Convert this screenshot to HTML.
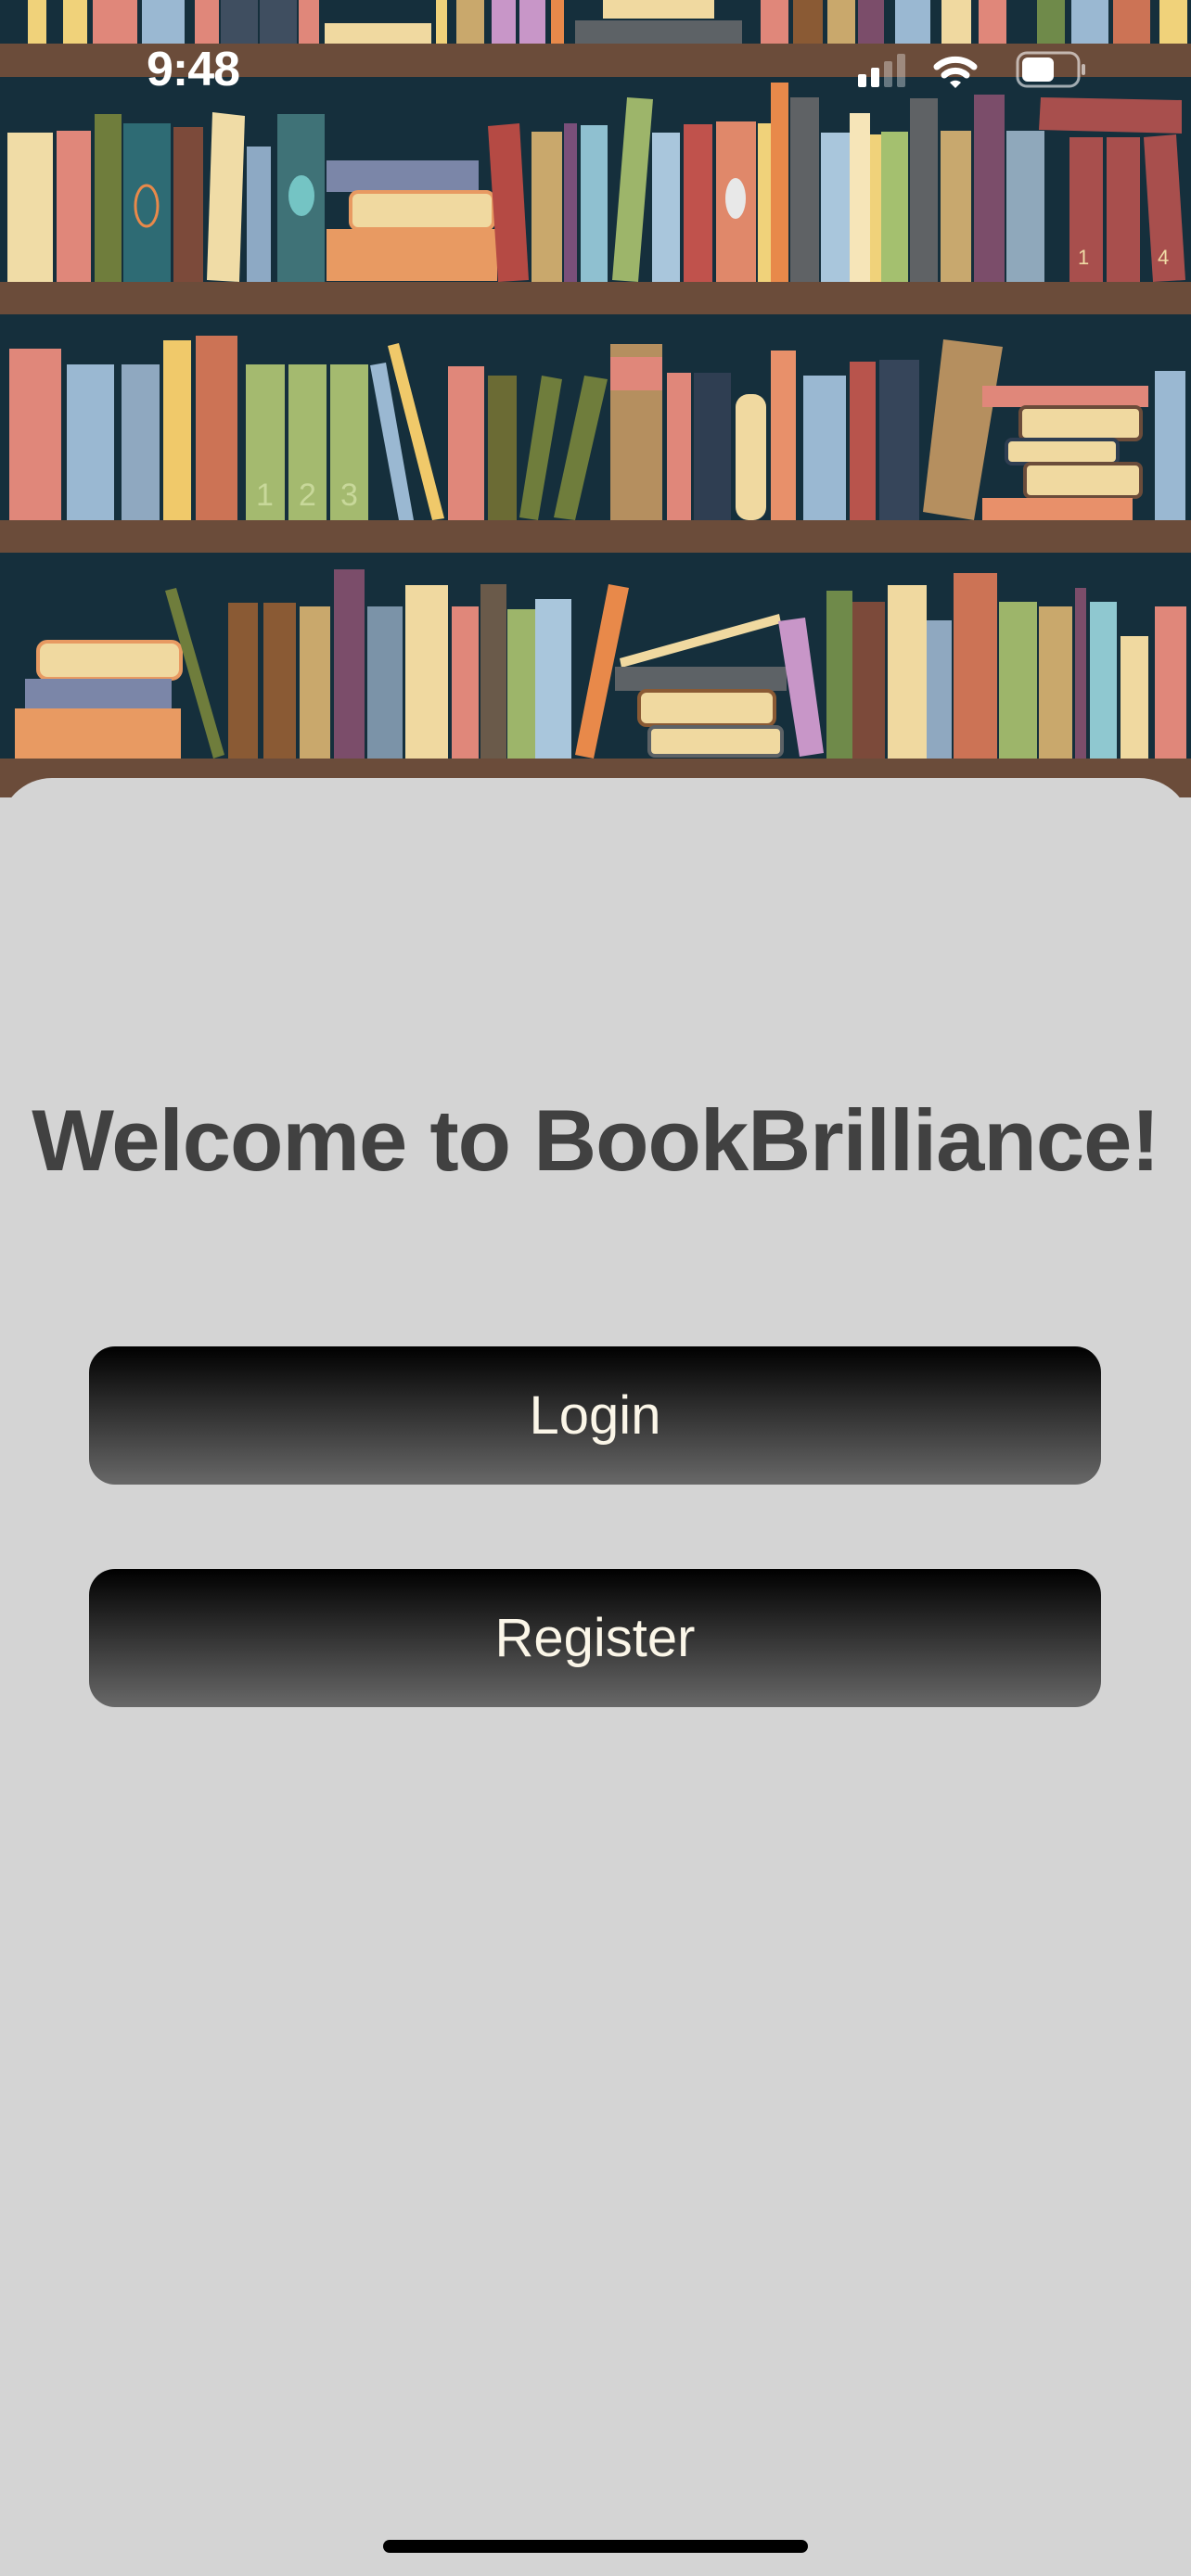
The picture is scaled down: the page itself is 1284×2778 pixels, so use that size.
<!DOCTYPE html>
<html><head><meta charset="utf-8"><style>
html,body{margin:0;padding:0;}
body{width:1284px;height:2778px;position:relative;overflow:hidden;background:#d4d4d4;font-family:"Liberation Sans",sans-serif;}
#shelf{position:absolute;left:0;top:0;}
.panel{position:absolute;left:0;top:839px;width:1284px;height:1939px;background:#d4d4d4;border-radius:56px 56px 0 0;}
.title{position:absolute;left:0;width:1284px;top:1176px;text-align:center;font-size:94px;font-weight:bold;color:#414141;letter-spacing:-1px;white-space:nowrap;}
.btn{position:absolute;left:96px;width:1091px;height:149px;border-radius:28px;background:linear-gradient(#000,#686868);color:#fbf6e8;font-size:58px;text-align:center;line-height:149px;}
.home{position:absolute;left:413px;top:2739px;width:458px;height:14px;border-radius:7px;background:#000;}
.time{position:absolute;left:158px;top:45px;color:#fff;font-weight:bold;font-size:52px;letter-spacing:-1px;}
</style></head><body>
<svg id="shelf" width="1284" height="860" viewBox="0 0 1284 860">
<rect width="1284" height="860" fill="#152f3c"/>
<g>
<rect x="30" y="0" width="20" height="47" fill="#f0d27a"/><rect x="68" y="0" width="26" height="47" fill="#f0d27a"/>
<rect x="100" y="0" width="48" height="47" fill="#e0877a"/><rect x="153" y="0" width="46" height="47" fill="#9ab8d2"/>
<rect x="210" y="0" width="26" height="47" fill="#e0877a"/><rect x="238" y="0" width="40" height="47" fill="#3f4e60"/>
<rect x="280" y="0" width="40" height="47" fill="#3f4e60"/><rect x="322" y="0" width="22" height="47" fill="#e0877a"/>
<rect x="350" y="25" width="115" height="22" fill="#f0d9a0"/><rect x="470" y="0" width="12" height="47" fill="#f0d27a"/>
<rect x="492" y="0" width="30" height="47" fill="#c9a86c"/><rect x="530" y="0" width="26" height="47" fill="#c896c8"/>
<rect x="560" y="0" width="28" height="47" fill="#c896c8"/><rect x="594" y="0" width="14" height="47" fill="#e8894a"/>
<rect x="620" y="22" width="180" height="25" fill="#5d6266"/><rect x="650" y="0" width="120" height="20" fill="#f0d9a0"/>
<rect x="820" y="0" width="30" height="47" fill="#e0877a"/><rect x="855" y="0" width="32" height="47" fill="#8a5a34"/>
<rect x="892" y="0" width="30" height="47" fill="#c9a86c"/><rect x="925" y="0" width="28" height="47" fill="#7b4d6a"/>
<rect x="965" y="0" width="38" height="47" fill="#9ab8d2"/><rect x="1015" y="0" width="32" height="47" fill="#f0d9a0"/>
<rect x="1055" y="0" width="30" height="47" fill="#e0877a"/><rect x="1118" y="0" width="30" height="47" fill="#6f8a4a"/>
<rect x="1155" y="0" width="40" height="47" fill="#9ab8d2"/><rect x="1200" y="0" width="40" height="47" fill="#cc7355"/>
<rect x="1250" y="0" width="30" height="47" fill="#f0d27a"/>
</g>
<rect x="0" y="47" width="1284" height="36" fill="#6b4c3a"/>
<g>
<rect x="8" y="143" width="49" height="161" fill="#f0dca6"/>
<rect x="61" y="141" width="37" height="163" fill="#e0877a"/>
<rect x="102" y="123" width="29" height="181" fill="#6f7d3c"/>
<rect x="133" y="133" width="51" height="171" fill="#2e6b74"/><ellipse cx="158" cy="222" rx="12" ry="22" fill="none" stroke="#e8894a" stroke-width="3"/>
<rect x="187" y="137" width="32" height="167" fill="#7c4a3a"/>
<polygon points="229,121 264,125 258,304 223,302" fill="#f0dca6"/>
<rect x="266" y="158" width="26" height="146" fill="#8da9c4"/>
<rect x="299" y="123" width="51" height="181" fill="#3f7277"/><ellipse cx="325" cy="211" rx="14" ry="22" fill="#74c4c4"/>
<rect x="352" y="173" width="164" height="34" fill="#7b86a8"/>
<rect x="378" y="207" width="154" height="40" rx="8" fill="#f0d9a0" stroke="#e89a62" stroke-width="4"/>
<rect x="352" y="247" width="184" height="56" fill="#e89a62"/>
<polygon points="526,136 560,133 570,302 537,304" fill="#b54a44"/>
<rect x="573" y="142" width="33" height="162" fill="#c9a86c"/>
<rect x="608" y="133" width="14" height="171" fill="#7a4f7a"/>
<rect x="626" y="135" width="29" height="169" fill="#8fc0d0"/>
<polygon points="676,105 704,107 688,304 660,302" fill="#9db56a"/>
<rect x="703" y="143" width="30" height="161" fill="#a9c6dc"/>
<rect x="737" y="134" width="31" height="170" fill="#c0524c"/>
<rect x="772" y="131" width="43" height="173" fill="#e0886a"/><ellipse cx="793" cy="214" rx="11" ry="22" fill="#e8e8e8"/>
<rect x="817" y="133" width="14" height="171" fill="#f0d27a"/>
<rect x="831" y="89" width="19" height="215" fill="#e8894a"/>
<rect x="852" y="105" width="31" height="199" fill="#5f6265"/>
<rect x="885" y="143" width="31" height="161" fill="#a9c6dc"/>
<rect x="916" y="122" width="22" height="182" fill="#f6e5b8"/>
<rect x="938" y="145" width="12" height="159" fill="#f0d27a"/>
<rect x="950" y="142" width="29" height="162" fill="#a4c06f"/>
<rect x="981" y="106" width="30" height="198" fill="#5f6265"/>
<rect x="1014" y="141" width="33" height="163" fill="#c8a86e"/>
<rect x="1050" y="102" width="33" height="202" fill="#7b4d6a"/>
<rect x="1085" y="141" width="41" height="163" fill="#8fa8bb"/>
<polygon points="1122,105 1274,108 1274,144 1120,140" fill="#a84f4d"/>
<rect x="1153" y="148" width="36" height="156" fill="#a84f4d"/>
<rect x="1193" y="148" width="36" height="156" fill="#a84f4d"/>
<polygon points="1233,148 1268,145 1278,302 1243,304" fill="#a84f4d"/>
<text x="1162" y="285" fill="#f0dca6" font-size="22" font-family="Liberation Sans">1</text>
<text x="1248" y="285" fill="#f0dca6" font-size="22" font-family="Liberation Sans">4</text>
</g>
<rect x="0" y="304" width="1284" height="35" fill="#6b4c3a"/>
<g>
<rect x="10" y="376" width="56" height="185" fill="#e0877a"/>
<rect x="72" y="393" width="51" height="168" fill="#9ab8d2"/>
<rect x="131" y="393" width="41" height="168" fill="#8fa8c0"/>
<rect x="176" y="367" width="30" height="194" fill="#f0c96a"/>
<rect x="211" y="362" width="45" height="199" fill="#cc7355"/>
<rect x="265" y="393" width="42" height="168" fill="#a4ba6f"/>
<rect x="311" y="393" width="41" height="168" fill="#a4ba6f"/>
<rect x="356" y="393" width="41" height="168" fill="#a4ba6f"/>
<text x="276" y="545" fill="#c8d89a" font-size="34" font-family="Liberation Sans">1</text>
<text x="322" y="545" fill="#c8d89a" font-size="34" font-family="Liberation Sans">2</text>
<text x="367" y="545" fill="#c8d89a" font-size="34" font-family="Liberation Sans">3</text>
<polygon points="399,394 416,391 446,561 430,561" fill="#9ab8d2"/>
<polygon points="418,373 430,370 479,559 466,561" fill="#f0c96a"/>
<rect x="483" y="395" width="39" height="166" fill="#e0877a"/>
<rect x="526" y="405" width="31" height="156" fill="#6b6b34"/>
<polygon points="584,405 606,409 580,561 560,558" fill="#6f7d3c"/>
<polygon points="630,405 655,409 620,561 597,558" fill="#6f7d3c"/>
<rect x="658" y="371" width="56" height="190" fill="#b58f5f"/><rect x="658" y="385" width="56" height="36" fill="#e0877a"/>
<rect x="719" y="402" width="26" height="159" fill="#e0877a"/>
<rect x="748" y="402" width="40" height="159" fill="#2f3e52"/>
<rect x="793" y="425" width="33" height="136" rx="14" fill="#f0d9a0"/>
<rect x="831" y="378" width="27" height="183" fill="#e8906a"/>
<rect x="866" y="405" width="46" height="156" fill="#9ab8d2"/>
<rect x="916" y="390" width="28" height="171" fill="#b8544c"/>
<rect x="948" y="388" width="43" height="173" fill="#36455a"/>
<polygon points="1017,366 1081,374 1050,561 995,552" fill="#b58f5f"/>
<rect x="1059" y="416" width="179" height="23" fill="#e0877a"/>
<rect x="1100" y="439" width="130" height="35" rx="6" fill="#f0d9a0" stroke="#6b4c3a" stroke-width="4"/>
<rect x="1085" y="474" width="120" height="26" rx="6" fill="#f0d9a0" stroke="#2f3e52" stroke-width="4"/>
<rect x="1105" y="500" width="125" height="36" rx="6" fill="#f0d9a0" stroke="#6b4c3a" stroke-width="4"/>
<rect x="1059" y="537" width="162" height="24" fill="#e8906a"/>
<rect x="1245" y="400" width="33" height="161" fill="#9ab8d2"/>
</g>
<rect x="0" y="561" width="1284" height="35" fill="#6b4c3a"/>
<g>
<rect x="41" y="692" width="154" height="40" rx="10" fill="#f0d9a0" stroke="#e89a62" stroke-width="4"/>
<rect x="27" y="732" width="158" height="32" fill="#7b86a8"/>
<rect x="16" y="764" width="179" height="54" fill="#e89a62"/>
<polygon points="178,637 190,634 242,814 230,818" fill="#6f7d3c"/>
<rect x="246" y="650" width="32" height="168" fill="#8a5a34"/>
<rect x="284" y="650" width="35" height="168" fill="#8a5a34"/>
<rect x="323" y="654" width="33" height="164" fill="#c9a86c"/>
<rect x="360" y="614" width="33" height="204" fill="#7b4d6a"/>
<rect x="396" y="654" width="38" height="164" fill="#7b93a8"/>
<rect x="437" y="631" width="46" height="187" fill="#f0d9a0"/>
<rect x="487" y="654" width="29" height="164" fill="#e0877a"/>
<rect x="518" y="630" width="28" height="188" fill="#6a5a4a"/>
<rect x="547" y="657" width="30" height="161" fill="#9db56a"/>
<rect x="577" y="646" width="39" height="172" fill="#a9c6dc"/>
<polygon points="656,630 678,634 640,818 620,814" fill="#e8894a"/>
<polygon points="668,710 840,662 842,672 670,720" fill="#f0d9a0"/>
<rect x="663" y="719" width="185" height="26" fill="#5d6266"/>
<rect x="689" y="745" width="146" height="37" rx="8" fill="#f0d9a0" stroke="#8a5a34" stroke-width="4"/>
<rect x="700" y="784" width="143" height="31" rx="6" fill="#f0d9a0" stroke="#5d6266" stroke-width="4"/>
<polygon points="839,670 868,666 888,812 862,816" fill="#c896c8"/>
<rect x="891" y="637" width="28" height="181" fill="#6f8a4a"/>
<rect x="919" y="649" width="35" height="169" fill="#7c4a3a"/>
<rect x="957" y="631" width="42" height="187" fill="#f0d9a0"/>
<rect x="999" y="669" width="27" height="149" fill="#8fa8c0"/>
<rect x="1028" y="618" width="47" height="200" fill="#cc7355"/>
<rect x="1077" y="649" width="41" height="169" fill="#9db56a"/>
<rect x="1120" y="654" width="36" height="164" fill="#c9a86c"/>
<rect x="1159" y="634" width="12" height="184" fill="#7b4d6a"/>
<rect x="1175" y="649" width="29" height="169" fill="#8fc8d0"/>
<rect x="1208" y="686" width="30" height="132" fill="#f0d9a0"/>
<rect x="1245" y="654" width="34" height="164" fill="#e0877a"/>
</g>
<rect x="0" y="818" width="1284" height="42" fill="#6b4c3a"/>
</svg>
<div class="time">9:48</div>
<svg style="position:absolute;left:920px;top:54px" width="270" height="46" viewBox="0 0 270 46">
<rect x="5" y="26" width="9" height="14" rx="2" fill="#fff"/>
<rect x="19" y="19" width="9" height="21" rx="2" fill="#fff"/>
<rect x="33" y="12" width="9" height="28" rx="2" fill="#fff" opacity="0.35"/>
<rect x="47" y="4" width="9" height="36" rx="2" fill="#fff" opacity="0.35"/>
<path d="M90 18 A30 30 0 0 1 130 18" stroke="#fff" stroke-width="7" fill="none" stroke-linecap="round"/>
<path d="M98 27 A18 18 0 0 1 122 27" stroke="#fff" stroke-width="7" fill="none" stroke-linecap="round"/>
<path d="M104 35 L110 41 L116 35 A9 9 0 0 0 104 35Z" fill="#fff"/>
<rect x="177" y="3" width="66" height="36" rx="10" fill="none" stroke="#fff" stroke-opacity="0.6" stroke-width="3"/>
<rect x="182" y="8" width="34" height="26" rx="6" fill="#fff"/>
<rect x="246" y="15" width="4" height="12" rx="2" fill="#fff" opacity="0.6"/>
</svg>
<div class="panel"></div>
<div class="title">Welcome to BookBrilliance!</div>
<div class="btn" style="top:1452px">Login</div>
<div class="btn" style="top:1692px">Register</div>
<div class="home"></div>
</body></html>
